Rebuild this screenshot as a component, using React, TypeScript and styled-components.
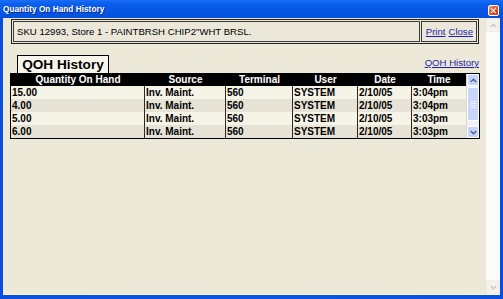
import React from "react";
import styled, { createGlobalStyle } from "styled-components";

const GlobalStyle = createGlobalStyle`
  html, body {
    margin: 0;
    padding: 0;
    overflow: hidden;
    background: #0a4ad8;
  }
`;

const Window = styled.div`
  width: 503px;
  height: 299px;
  display: flex;
  flex-direction: column;
  background: linear-gradient(90deg, #0a4ee0 0%, #0a56ea 50%, #0a4ee0 100%);
  font-family: "Liberation Sans", Arial, sans-serif;
  box-sizing: border-box;
`;

const TitleBar = styled.div`
  height: 18px;
  flex: none;
  display: flex;
  align-items: center;
  justify-content: space-between;
  padding: 0 4px 0 3px;
  background: linear-gradient(
    rgb(28, 110, 246) 0%,
    rgb(12, 96, 236) 20%,
    rgb(6, 86, 228) 60%,
    rgb(4, 80, 220) 100%
  );
`;

const TitleText = styled.span`
  color: #fff;
  font-weight: 700;
  font-size: 8.2px;
  text-shadow: #0a2a8a 1px 1px;
  letter-spacing: 0.05px;
`;

const CloseBtn = styled.div`
  position: relative;
  width: 9px;
  height: 9px;
  margin-top: 2px;
  border: 1px solid #fff;
  border-radius: 2px;
  background: radial-gradient(circle at 80% 80%, #c93a12 0%, #e0603a 60%, #f3a890 100%);
  &:before,
  &:after {
    content: "";
    position: absolute;
    left: 4px;
    top: 1px;
    width: 1.4px;
    height: 7px;
    background: #fff;
    transform: rotate(45deg);
  }
  &:after {
    transform: rotate(-45deg);
  }
`;

const Frame = styled.div`
  flex: 1;
  display: flex;
  margin: 0 3px 4px 3px;
  border-bottom: 1px solid #f8f8f4;
`;

const Client = styled.div`
  flex: 1;
  background: #ece9d8;
  padding: 1px 0 0 7px;
`;

const PageScroll = styled.div`
  width: 14px;
  display: flex;
  flex-direction: column;
  justify-content: space-between;
  background: #fbfbf8;
`;

const PageScrollBtn = styled.div`
  height: 14px;
  display: flex;
  align-items: center;
  justify-content: center;
  background: #f3f2ec;
  border: 1px solid #eeede6;
  box-sizing: border-box;
`;

const Content = styled.div`
  width: 470px;
`;

const HeaderBox = styled.div`
  display: flex;
  gap: 1px;
  padding: 1px;
  margin-left: 1px;
  width: 468px;
  box-sizing: border-box;
  border: 1px solid #222;
`;

const HeaderCell = styled.div<{ $grow?: boolean }>`
  flex: ${(p) => (p.$grow ? 1 : "none")};
  height: 21px;
  box-sizing: border-box;
  display: flex;
  align-items: center;
  gap: 3px;
  padding: 0 3px 0 ${(p) => (p.$grow ? 3 : 4)}px;
  border: 1px solid #3a3a3a;
  background: #ebe8da;
  font-size: 9.6px;
  color: #000;
`;

const Link = styled.span`
  color: #1f1fa8;
  text-decoration: underline;
  font-size: 9.6px;
`;

const TabRow = styled.div`
  display: flex;
  justify-content: space-between;
  align-items: flex-start;
  margin-top: 11px;
`;

const Tab = styled.div`
  margin-left: 7px;
  width: 92px;
  height: 18px;
  box-sizing: border-box;
  border: 1px solid #000;
  border-bottom: none;
  background: #f7f5ec;
  font-weight: 700;
  font-size: 13.6px;
  line-height: 17px;
  text-align: center;
  color: #000;
`;

const TabLink = styled(Link)`
  margin-top: 2px;
  margin-right: 1px;
`;

const TableBox = styled.div`
  display: flex;
  border: 1px solid #000;
  width: 470px;
  box-sizing: border-box;
`;

const cols = "134px 81px 67px 65px 54px 1fr";

const Grid = styled.div`
  flex: 1;
  display: grid;
  grid-template-columns: ${cols};
`;

const HeadCell = styled.div`
  height: 12px;
  background: #000;
  color: #fff;
  font-weight: 700;
  font-size: 10px;
  line-height: 12px;
  text-align: center;
`;

const BodyCell = styled.div<{ $dark: boolean; $last?: boolean }>`
  height: 13px;
  box-sizing: border-box;
  padding-left: 1px;
  background: ${(p) => (p.$dark ? "#e6e3d6" : "#f6f3e7")};
  border-right: ${(p) => (p.$last ? "none" : "1px solid #2a2a2a")};
  font-weight: 700;
  font-size: 10px;
  line-height: 13px;
  color: #000;
  white-space: nowrap;
  overflow: hidden;
`;

const InnerScroll = styled.div`
  width: 12px;
  display: flex;
  flex-direction: column;
  background: #f1f2f8;
  border-left: 1px solid #d8d8d0;
`;

const ScrollBtn = styled.div`
  height: 12px;
  flex: none;
  display: flex;
  align-items: center;
  justify-content: center;
  box-sizing: border-box;
  border: 1px solid #fff;
  border-radius: 2px;
  background: #c6d4fb;
`;

const Thumb = styled.div`
  height: 34px;
  margin-top: 1px;
  display: flex;
  flex-direction: column;
  align-items: center;
  justify-content: center;
  gap: 1px;
  box-sizing: border-box;
  border: 1px solid #fff;
  border-radius: 2px;
  background: #c9d6fc;
`;

const Grip = styled.div`
  width: 5px;
  height: 1px;
  background: #eef2fe;
`;

const Track = styled.div`
  flex: 1;
`;

const Chevron = ({ up, color }: { up?: boolean; color: string }) => (
  <svg width="7" height="5" viewBox="0 0 7 5">
    <path
      d={up ? "M0.8 4 L3.5 1.3 L6.2 4" : "M0.8 1 L3.5 3.7 L6.2 1"}
      fill="none"
      stroke={color}
      strokeWidth="1.4"
    />
  </svg>
);

const headers = ["Quantity On Hand", "Source", "Terminal", "User", "Date", "Time"];
const rows = [
  ["15.00", "Inv. Maint.", "560", "SYSTEM", "2/10/05", "3:04pm"],
  ["4.00", "Inv. Maint.", "560", "SYSTEM", "2/10/05", "3:04pm"],
  ["5.00", "Inv. Maint.", "560", "SYSTEM", "2/10/05", "3:03pm"],
  ["6.00", "Inv. Maint.", "560", "SYSTEM", "2/10/05", "3:03pm"],
];

export default function App() {
  return (
    <>
      <GlobalStyle />
      <Window>
        <TitleBar>
          <TitleText>Quantity On Hand History</TitleText>
          <CloseBtn />
        </TitleBar>
        <Frame>
          <Client>
            <Content>
              <HeaderBox>
                <HeaderCell $grow>SKU 12993, Store 1 - PAINTBRSH CHIP2"WHT BRSL.</HeaderCell>
                <HeaderCell>
                  <Link>Print</Link>
                  <Link>Close</Link>
                </HeaderCell>
              </HeaderBox>
              <TabRow>
                <Tab>QOH History</Tab>
                <TabLink>QOH History</TabLink>
              </TabRow>
              <TableBox>
                <Grid>
                  {headers.map((h) => (
                    <HeadCell key={h}>{h}</HeadCell>
                  ))}
                  {rows.map((r, i) =>
                    r.map((c, j) => (
                      <BodyCell key={`${i}-${j}`} $dark={i % 2 === 1} $last={j === r.length - 1}>
                        {c}
                      </BodyCell>
                    ))
                  )}
                </Grid>
                <InnerScroll>
                  <ScrollBtn>
                    <Chevron up color="#4d6185" />
                  </ScrollBtn>
                  <Thumb>
                    <Grip />
                    <Grip />
                    <Grip />
                    <Grip />
                  </Thumb>
                  <Track />
                  <ScrollBtn>
                    <Chevron color="#4d6185" />
                  </ScrollBtn>
                </InnerScroll>
              </TableBox>
            </Content>
          </Client>
          <PageScroll>
            <PageScrollBtn>
              <Chevron up color="#c9c8c0" />
            </PageScrollBtn>
            <PageScrollBtn>
              <Chevron color="#c9c8c0" />
            </PageScrollBtn>
          </PageScroll>
        </Frame>
      </Window>
    </>
  );
}
